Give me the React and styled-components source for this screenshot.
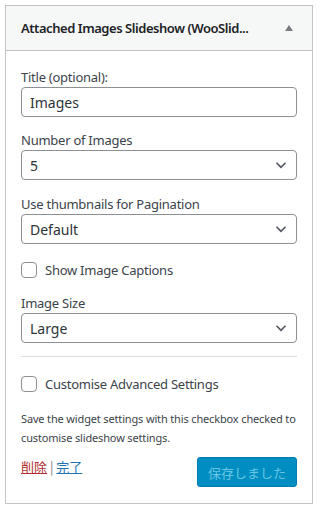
import React from "react";
import styled, { createGlobalStyle } from "styled-components";

const Global = createGlobalStyle`
  html, body { margin: 0; padding: 0; background: #fff; }
  body { font-family: "Noto Sans", "Noto Sans CJK JP", sans-serif; color: #1d2327; }
  * { box-sizing: border-box; }
`;

const Page = styled.div`
  padding: 5px 6px 5px 5px;
`;

const Widget = styled.div`
  border: 1px solid #c3c4c7;
  background: #fff;
`;

const Header = styled.div`
  display: flex;
  align-items: center;
  height: 45px;
  padding: 0 15px;
  background: #f6f7f7;
  border-bottom: 1px solid #c3c4c7;
`;

const HeaderTitle = styled.h3`
  flex: 1;
  margin: 0;
  font-size: 13px;
  font-weight: 600;
  color: #1d2327;
  white-space: nowrap;
  letter-spacing: -0.45px;
`;

const Toggle = styled.span`
  width: 0;
  height: 0;
  margin-left: 20px;
  margin-right: 4px;
  border-left: 4px solid transparent;
  border-right: 4px solid transparent;
  border-bottom: 6px solid #787c82;
`;

const Inside = styled.div`
  padding: 1px 15px 16px 15px;
`;

const Field = styled.div`
  margin-top: ${(p) => p.$top}px;
`;

const Label = styled.label`
  display: block;
  font-size: 13px;
  line-height: 18px;
  margin-bottom: 1px;
  color: #3c434a;
  letter-spacing: -0.25px;
`;

const TextInput = styled.input`
  display: block;
  width: 100%;
  height: 30px;
  padding: 0 8px;
  border: 1px solid #8c8f94;
  border-radius: 4px;
  font-family: inherit;
  font-size: 14px;
  color: #2c3338;
  background: #fff;
  outline: none;
`;

const SelectBox = styled.div`
  display: flex;
  align-items: center;
  justify-content: space-between;
  height: 30px;
  padding: 0 6px 0 8px;
  border: 1px solid #8c8f94;
  border-radius: 4px;
  font-size: 14px;
  color: #2c3338;
  background: #fff;
`;

const CheckRow = styled.label`
  display: flex;
  align-items: center;
  gap: 8px;
  font-size: 13px;
  color: #3c434a;
  letter-spacing: -0.25px;
  margin-top: ${(p) => p.$top}px;
`;

const Box = styled.span`
  width: 16px;
  height: 16px;
  border: 1px solid #8c8f94;
  border-radius: 4px;
  background: #fff;
  flex: none;
`;

const Rule = styled.hr`
  border: 0;
  border-top: 1px solid #dcdcde;
  margin: 13px 0 0;
`;

const Note = styled.p`
  margin: 16px 0 0;
  font-size: 11px;
  line-height: 19px;
  color: #3c434a;
  letter-spacing: -0.15px;
`;

const Footer = styled.div`
  display: flex;
  justify-content: space-between;
  align-items: flex-start;
  margin-top: 10px;
`;

const Links = styled.div`
  font-size: 13px;
  color: #787c82;
  font-family: "Noto Sans CJK JP", sans-serif;
`;

const Link = styled.a`
  color: ${(p) => (p.$danger ? "#b32d2e" : "#2271b1")};
  text-decoration: underline;
`;

const SaveButton = styled.button`
  width: 100px;
  height: 30px;
  border: 1px solid #007cb2;
  border-radius: 3px;
  background: #008ec2;
  color: #66c6e4;
  font-family: "Noto Sans CJK JP", sans-serif;
  font-size: 13px;
  padding: 0;
`;

const Chevron = () => (
  <svg width="18" height="18" viewBox="0 0 20 20" aria-hidden="true">
    <path d="M5 7.5 L10 12.5 L15 7.5" fill="none" stroke="#50575e" strokeWidth="1.8" />
  </svg>
);

const Select = ({ value }) => (
  <SelectBox>
    <span>{value}</span>
    <Chevron />
  </SelectBox>
);

export default function App() {
  return (
    <Page>
      <Global />
      <Widget>
        <Header>
          <HeaderTitle>Attached Images Slideshow (WooSlid...</HeaderTitle>
          <Toggle />
        </Header>
        <Inside>
          <Field $top={16}>
            <Label>Title (optional):</Label>
            <TextInput defaultValue="Images" />
          </Field>
          <Field $top={14}>
            <Label>Number of Images</Label>
            <Select value="5" />
          </Field>
          <Field $top={15}>
            <Label>Use thumbnails for Pagination</Label>
            <Select value="Default" />
          </Field>
          <CheckRow $top={17}>
            <Box />
            Show Image Captions
          </CheckRow>
          <Field $top={15}>
            <Label>Image Size</Label>
            <Select value="Large" />
          </Field>
          <Rule />
          <CheckRow $top={18}>
            <Box />
            Customise Advanced Settings
          </CheckRow>
          <Note>
            Save the widget settings with this checkbox checked to customise slideshow settings.
          </Note>
          <Footer>
            <Links>
              <Link $danger href="#">削除</Link> | <Link href="#">完了</Link>
            </Links>
            <SaveButton disabled>保存しました</SaveButton>
          </Footer>
        </Inside>
      </Widget>
    </Page>
  );
}
